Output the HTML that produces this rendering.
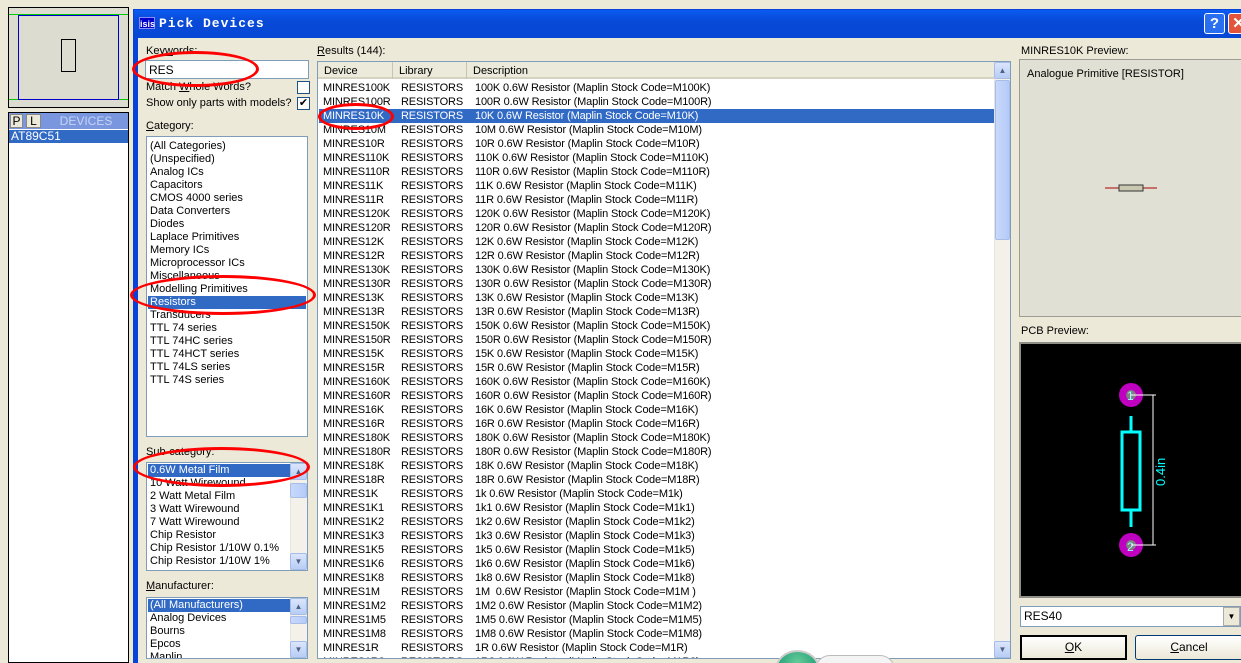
<!DOCTYPE html>
<html style="overflow:hidden;width:1241px;height:663px"><head><meta charset="utf-8"><style>
*{margin:0;padding:0;box-sizing:border-box}
body{width:1241px;height:663px;overflow:hidden;background:#ece9d8;font-family:"Liberation Sans",sans-serif;font-size:11px;color:#000;position:relative}
.a{position:absolute}
.w{background:#fff;border:1px solid #7f9db9}
.li{position:absolute;left:3px;height:13px;line-height:13px;white-space:nowrap}
.sel{background:#316ac5;color:#fff}
.row{position:absolute;left:1px;width:675px;height:14px;line-height:14px;white-space:nowrap;letter-spacing:-0.15px}
.row span{position:absolute;top:0}
.c1{left:4px}.c2{left:82px}.c3{left:156px}
.sb{position:absolute;background:#f3f1ea;border-left:1px solid #e6e4dc}
.btn{position:absolute;width:17px;height:17px;background:linear-gradient(#dbe5fb,#b7cdf6);border:1px solid #a6bde8;border-radius:2px;color:#4d6185;font-size:8px;text-align:center;line-height:15px}
.thumb{position:absolute;background:linear-gradient(90deg,#c9d8fc,#b4cbf8);border:1px solid #a6bde8;border-radius:2px}
.ell{position:absolute;border:3px solid #f00;border-radius:50%}
</style></head><body>
<div class="a" style="left:0;top:0;width:1241px;height:663px;overflow:hidden">
<!-- left app panel -->
<div class="a" style="left:0;top:0;width:133px;height:663px;background:#ece9d8"></div>
<div class="a" style="left:8px;top:7px;width:121px;height:101px;border:1px solid #000;background:#dcdcd0"></div>
<div class="a" style="left:9px;top:14px;width:119px;height:86px;border-top:1px solid #0c0;border-bottom:1px solid #0c0"></div>
<div class="a" style="left:18px;top:15px;width:101px;height:85px;border:1px solid #00c"></div>
<div class="a" style="left:61px;top:39px;width:15px;height:33px;border:1px solid #000"></div>
<div class="a" style="left:8px;top:112px;width:121px;height:551px;border:1px solid #000;background:#fff"></div>
<div class="a" style="left:9px;top:113px;width:119px;height:16px;background:#7a96df"></div>
<div class="a" style="left:10px;top:114px;width:13px;height:14px;background:#ece9d8;border:1px solid #888;text-align:center;line-height:12px;font-size:12px">P</div>
<div class="a" style="left:26px;top:114px;width:15px;height:14px;background:#ece9d8;border:1px solid #888;text-align:center;line-height:12px;font-size:12px">L</div>
<div class="a" style="left:44px;top:114px;width:84px;height:14px;color:#c7d4f3;text-align:center;line-height:14px;font-size:12px">DEVICES</div>
<div class="a sel" style="left:9px;top:130px;width:119px;height:13px;line-height:13px;padding-left:2px;font-size:12px">AT89C51</div>

<!-- dialog frame -->
<div class="a" style="left:133px;top:9px;width:1108px;height:654px;background:#0842d6"></div>
<div class="a" style="left:134px;top:10px;width:1107px;height:28px;background:linear-gradient(#0a5cf0,#0849d8 40%,#0647d4)"></div>
<div class="a" style="left:139px;top:17px;width:16px;height:12px;background:#0000c8;color:#fff;font-size:9px;font-weight:bold;line-height:12px;border:1px solid #88f">isis</div>
<div class="a" style="left:159px;top:16px;color:#fff;font-family:'Liberation Mono',monospace;font-weight:bold;font-size:13px;letter-spacing:1px">Pick Devices</div>
<div class="a" style="left:1204px;top:13px;width:21px;height:21px;background:#2a6ff0;border:1px solid #fff;border-radius:3px;color:#fff;font-weight:bold;font-size:15px;text-align:center;line-height:19px">?</div>
<div class="a" style="left:1228px;top:13px;width:21px;height:21px;background:#e2553a;border:1px solid #fff;border-radius:3px;color:#fff;font-weight:bold;font-size:15px;text-align:center;line-height:19px">✕</div>
<div class="a" style="left:138px;top:38px;width:1103px;height:625px;background:#ece9d8"></div>

<!-- keywords -->
<div class="a" style="left:146px;top:45px">Key<u>w</u>ords:</div>
<div class="a" style="left:145px;top:60px;width:164px;height:19px;background:#fff;border:1px solid #7f9db9;padding:2px 3px;font-size:12px">RES</div>
<div class="a" style="left:146px;top:81px">Match <u>W</u>hole Words?</div>
<div class="a" style="left:297px;top:81px;width:13px;height:13px;background:#fff;border:1px solid #1c5180"></div>
<div class="a" style="left:146px;top:97px">Show only parts with models?</div>
<div class="a" style="left:297px;top:97px;width:13px;height:13px;background:#fff;border:1px solid #1c5180;font-size:11px;line-height:11px;text-align:center">✔</div>
<div class="a" style="left:146px;top:120px"><u>C</u>ategory:</div>
<div class="a w" style="left:146px;top:136px;width:162px;height:301px">
<div class="li" style="top:3px">(All Categories)</div>
<div class="li" style="top:16px">(Unspecified)</div>
<div class="li" style="top:29px">Analog ICs</div>
<div class="li" style="top:42px">Capacitors</div>
<div class="li" style="top:55px">CMOS 4000 series</div>
<div class="li" style="top:68px">Data Converters</div>
<div class="li" style="top:81px">Diodes</div>
<div class="li" style="top:94px">Laplace Primitives</div>
<div class="li" style="top:107px">Memory ICs</div>
<div class="li" style="top:120px">Microprocessor ICs</div>
<div class="li" style="top:133px">Miscellaneous</div>
<div class="li" style="top:146px">Modelling Primitives</div>
<div class="li sel" style="top:159px;left:1px;width:158px;padding-left:2px">Resistors</div>
<div class="li" style="top:172px">Transducers</div>
<div class="li" style="top:185px">TTL 74 series</div>
<div class="li" style="top:198px">TTL 74HC series</div>
<div class="li" style="top:211px">TTL 74HCT series</div>
<div class="li" style="top:224px">TTL 74LS series</div>
<div class="li" style="top:237px">TTL 74S series</div>
</div>
<div class="a" style="left:146px;top:446px">Sub-category:</div>
<div class="a w" style="left:146px;top:462px;width:162px;height:109px;overflow:hidden">
<div class="li sel" style="top:1px;left:1px;width:142px;padding-left:2px">0.6W Metal Film</div>
<div class="li" style="top:14px">10 Watt Wirewound</div>
<div class="li" style="top:27px">2 Watt Metal Film</div>
<div class="li" style="top:40px">3 Watt Wirewound</div>
<div class="li" style="top:53px">7 Watt Wirewound</div>
<div class="li" style="top:66px">Chip Resistor</div>
<div class="li" style="top:79px">Chip Resistor 1/10W 0.1%</div>
<div class="li" style="top:92px">Chip Resistor 1/10W 1%</div>
<div class="sb" style="left:143px;top:0;width:17px;height:107px"></div>
<div class="btn" style="left:143px;top:0">▲</div>
<div class="thumb" style="left:143px;top:20px;width:17px;height:15px"></div>
<div class="btn" style="left:143px;top:90px">▼</div>
</div>
<div class="a" style="left:146px;top:580px"><u>M</u>anufacturer:</div>
<div class="a w" style="left:146px;top:597px;width:162px;height:62px;overflow:hidden">
<div class="li sel" style="top:1px;left:1px;width:142px;padding-left:2px">(All Manufacturers)</div>
<div class="li" style="top:14px">Analog Devices</div>
<div class="li" style="top:27px">Bourns</div>
<div class="li" style="top:40px">Epcos</div>
<div class="li" style="top:53px">Maplin</div>
<div class="sb" style="left:143px;top:0;width:17px;height:60px"></div>
<div class="btn" style="left:143px;top:0">▲</div>
<div class="thumb" style="left:143px;top:18px;width:17px;height:8px"></div>
<div class="btn" style="left:143px;top:43px">▼</div>
</div>

<!-- results -->
<div class="a" style="left:317px;top:45px"><u>R</u>esults (144):</div>
<div class="a w" style="left:317px;top:61px;width:694px;height:598px;overflow:hidden">
<div class="a" style="left:0;top:0;width:676px;height:17px;background:#ebeadb;border-bottom:2px solid #d6d2c2"></div>
<div class="a" style="left:0;top:0;width:75px;height:17px;border-right:1px solid #c7c5b2;padding:3px 6px">Device</div>
<div class="a" style="left:75px;top:0;width:74px;height:17px;border-right:1px solid #c7c5b2;padding:3px 6px">Library</div>
<div class="a" style="left:149px;top:0;width:527px;height:17px;padding:3px 6px">Description</div>
<div class="a" style="left:0;top:19px">
<div class="row" style="top:0"><span class="c1">MINRES100K</span><span class="c2">RESISTORS</span><span class="c3">100K 0.6W Resistor (Maplin Stock Code=M100K)</span></div>
<div class="row" style="top:14px"><span class="c1">MINRES100R</span><span class="c2">RESISTORS</span><span class="c3">100R 0.6W Resistor (Maplin Stock Code=M100R)</span></div>
<div class="row sel" style="top:28px"><span class="c1">MINRES10K</span><span class="c2">RESISTORS</span><span class="c3">10K 0.6W Resistor (Maplin Stock Code=M10K)</span></div>
<div class="row" style="top:42px"><span class="c1">MINRES10M</span><span class="c2">RESISTORS</span><span class="c3">10M 0.6W Resistor (Maplin Stock Code=M10M)</span></div>
<div class="row" style="top:56px"><span class="c1">MINRES10R</span><span class="c2">RESISTORS</span><span class="c3">10R 0.6W Resistor (Maplin Stock Code=M10R)</span></div>
<div class="row" style="top:70px"><span class="c1">MINRES110K</span><span class="c2">RESISTORS</span><span class="c3">110K 0.6W Resistor (Maplin Stock Code=M110K)</span></div>
<div class="row" style="top:84px"><span class="c1">MINRES110R</span><span class="c2">RESISTORS</span><span class="c3">110R 0.6W Resistor (Maplin Stock Code=M110R)</span></div>
<div class="row" style="top:98px"><span class="c1">MINRES11K</span><span class="c2">RESISTORS</span><span class="c3">11K 0.6W Resistor (Maplin Stock Code=M11K)</span></div>
<div class="row" style="top:112px"><span class="c1">MINRES11R</span><span class="c2">RESISTORS</span><span class="c3">11R 0.6W Resistor (Maplin Stock Code=M11R)</span></div>
<div class="row" style="top:126px"><span class="c1">MINRES120K</span><span class="c2">RESISTORS</span><span class="c3">120K 0.6W Resistor (Maplin Stock Code=M120K)</span></div>
<div class="row" style="top:140px"><span class="c1">MINRES120R</span><span class="c2">RESISTORS</span><span class="c3">120R 0.6W Resistor (Maplin Stock Code=M120R)</span></div>
<div class="row" style="top:154px"><span class="c1">MINRES12K</span><span class="c2">RESISTORS</span><span class="c3">12K 0.6W Resistor (Maplin Stock Code=M12K)</span></div>
<div class="row" style="top:168px"><span class="c1">MINRES12R</span><span class="c2">RESISTORS</span><span class="c3">12R 0.6W Resistor (Maplin Stock Code=M12R)</span></div>
<div class="row" style="top:182px"><span class="c1">MINRES130K</span><span class="c2">RESISTORS</span><span class="c3">130K 0.6W Resistor (Maplin Stock Code=M130K)</span></div>
<div class="row" style="top:196px"><span class="c1">MINRES130R</span><span class="c2">RESISTORS</span><span class="c3">130R 0.6W Resistor (Maplin Stock Code=M130R)</span></div>
<div class="row" style="top:210px"><span class="c1">MINRES13K</span><span class="c2">RESISTORS</span><span class="c3">13K 0.6W Resistor (Maplin Stock Code=M13K)</span></div>
<div class="row" style="top:224px"><span class="c1">MINRES13R</span><span class="c2">RESISTORS</span><span class="c3">13R 0.6W Resistor (Maplin Stock Code=M13R)</span></div>
<div class="row" style="top:238px"><span class="c1">MINRES150K</span><span class="c2">RESISTORS</span><span class="c3">150K 0.6W Resistor (Maplin Stock Code=M150K)</span></div>
<div class="row" style="top:252px"><span class="c1">MINRES150R</span><span class="c2">RESISTORS</span><span class="c3">150R 0.6W Resistor (Maplin Stock Code=M150R)</span></div>
<div class="row" style="top:266px"><span class="c1">MINRES15K</span><span class="c2">RESISTORS</span><span class="c3">15K 0.6W Resistor (Maplin Stock Code=M15K)</span></div>
<div class="row" style="top:280px"><span class="c1">MINRES15R</span><span class="c2">RESISTORS</span><span class="c3">15R 0.6W Resistor (Maplin Stock Code=M15R)</span></div>
<div class="row" style="top:294px"><span class="c1">MINRES160K</span><span class="c2">RESISTORS</span><span class="c3">160K 0.6W Resistor (Maplin Stock Code=M160K)</span></div>
<div class="row" style="top:308px"><span class="c1">MINRES160R</span><span class="c2">RESISTORS</span><span class="c3">160R 0.6W Resistor (Maplin Stock Code=M160R)</span></div>
<div class="row" style="top:322px"><span class="c1">MINRES16K</span><span class="c2">RESISTORS</span><span class="c3">16K 0.6W Resistor (Maplin Stock Code=M16K)</span></div>
<div class="row" style="top:336px"><span class="c1">MINRES16R</span><span class="c2">RESISTORS</span><span class="c3">16R 0.6W Resistor (Maplin Stock Code=M16R)</span></div>
<div class="row" style="top:350px"><span class="c1">MINRES180K</span><span class="c2">RESISTORS</span><span class="c3">180K 0.6W Resistor (Maplin Stock Code=M180K)</span></div>
<div class="row" style="top:364px"><span class="c1">MINRES180R</span><span class="c2">RESISTORS</span><span class="c3">180R 0.6W Resistor (Maplin Stock Code=M180R)</span></div>
<div class="row" style="top:378px"><span class="c1">MINRES18K</span><span class="c2">RESISTORS</span><span class="c3">18K 0.6W Resistor (Maplin Stock Code=M18K)</span></div>
<div class="row" style="top:392px"><span class="c1">MINRES18R</span><span class="c2">RESISTORS</span><span class="c3">18R 0.6W Resistor (Maplin Stock Code=M18R)</span></div>
<div class="row" style="top:406px"><span class="c1">MINRES1K</span><span class="c2">RESISTORS</span><span class="c3">1k 0.6W Resistor (Maplin Stock Code=M1k)</span></div>
<div class="row" style="top:420px"><span class="c1">MINRES1K1</span><span class="c2">RESISTORS</span><span class="c3">1k1 0.6W Resistor (Maplin Stock Code=M1k1)</span></div>
<div class="row" style="top:434px"><span class="c1">MINRES1K2</span><span class="c2">RESISTORS</span><span class="c3">1k2 0.6W Resistor (Maplin Stock Code=M1k2)</span></div>
<div class="row" style="top:448px"><span class="c1">MINRES1K3</span><span class="c2">RESISTORS</span><span class="c3">1k3 0.6W Resistor (Maplin Stock Code=M1k3)</span></div>
<div class="row" style="top:462px"><span class="c1">MINRES1K5</span><span class="c2">RESISTORS</span><span class="c3">1k5 0.6W Resistor (Maplin Stock Code=M1k5)</span></div>
<div class="row" style="top:476px"><span class="c1">MINRES1K6</span><span class="c2">RESISTORS</span><span class="c3">1k6 0.6W Resistor (Maplin Stock Code=M1k6)</span></div>
<div class="row" style="top:490px"><span class="c1">MINRES1K8</span><span class="c2">RESISTORS</span><span class="c3">1k8 0.6W Resistor (Maplin Stock Code=M1k8)</span></div>
<div class="row" style="top:504px"><span class="c1">MINRES1M</span><span class="c2">RESISTORS</span><span class="c3">1M&nbsp; 0.6W Resistor (Maplin Stock Code=M1M )</span></div>
<div class="row" style="top:518px"><span class="c1">MINRES1M2</span><span class="c2">RESISTORS</span><span class="c3">1M2 0.6W Resistor (Maplin Stock Code=M1M2)</span></div>
<div class="row" style="top:532px"><span class="c1">MINRES1M5</span><span class="c2">RESISTORS</span><span class="c3">1M5 0.6W Resistor (Maplin Stock Code=M1M5)</span></div>
<div class="row" style="top:546px"><span class="c1">MINRES1M8</span><span class="c2">RESISTORS</span><span class="c3">1M8 0.6W Resistor (Maplin Stock Code=M1M8)</span></div>
<div class="row" style="top:560px"><span class="c1">MINRES1R</span><span class="c2">RESISTORS</span><span class="c3">1R 0.6W Resistor (Maplin Stock Code=M1R)</span></div>
<div class="row" style="top:574px"><span class="c1">MINRES1R2</span><span class="c2">RESISTORS</span><span class="c3">1R2 0.6W Resistor (Maplin Stock Code=M1R2)</span></div>
</div>
<div class="sb" style="left:676px;top:0;width:17px;height:597px"></div>
<div class="btn" style="left:676px;top:0">▲</div>
<div class="thumb" style="left:677px;top:18px;width:15px;height:160px"></div>
<div class="btn" style="left:676px;top:579px">▼</div>
</div>

<!-- right -->
<div class="a" style="left:1021px;top:45px">MINRES10K Preview:</div>
<div class="a" style="left:1019px;top:59px;width:222px;height:258px;background:#e1e0d4;border:1px solid #9d9d92;border-right:none"></div>
<div class="a" style="left:1027px;top:68px">Analogue Primitive [RESISTOR]</div>
<svg class="a" style="left:1105px;top:183px" width="52" height="10"><line x1="0" y1="5" x2="14" y2="5" stroke="#a00"/><line x1="38" y1="5" x2="52" y2="5" stroke="#a00"/><rect x="14" y="2" width="24" height="6" fill="#c8c8b0" stroke="#333"/></svg>
<div class="a" style="left:1021px;top:325px">PCB Preview:</div>
<div class="a" style="left:1019px;top:342px;width:222px;height:256px;background:#000;border:2px solid #8f8f88;border-right:none"></div>
<svg class="a" style="left:1021px;top:344px" width="220" height="252">
<line x1="110" y1="72" x2="110" y2="88" stroke="#0ff" stroke-width="3"/>
<rect x="101" y="88" width="18" height="78" fill="none" stroke="#0ff" stroke-width="3"/>
<line x1="110" y1="166" x2="110" y2="183" stroke="#0ff" stroke-width="3"/>
<circle cx="110" cy="51" r="12" fill="#c000c0"/><circle cx="110" cy="51" r="5" fill="#808080"/>
<circle cx="110" cy="201" r="12" fill="#c000c0"/><circle cx="110" cy="201" r="5" fill="#808080"/>
<text x="106" y="56" fill="#9ff" font-size="12" font-family="Liberation Sans">1</text>
<text x="106" y="207" fill="#9ff" font-size="12" font-family="Liberation Sans">2</text>
<line x1="110" y1="51" x2="135" y2="51" stroke="#fff"/><line x1="110" y1="201" x2="135" y2="201" stroke="#fff"/>
<line x1="132" y1="51" x2="132" y2="201" stroke="#fff"/>
<text x="0" y="0" fill="#0ff" font-size="13" font-family="Liberation Sans" transform="translate(144,142) rotate(-90)">0.4in</text>
</svg>
<div class="a" style="left:1020px;top:606px;width:221px;height:21px;background:#fff;border:1px solid #7f9db9;padding:2px 3px;font-size:12px">RES40</div>
<div class="a" style="left:1223px;top:607px;width:17px;height:19px;background:#ece9d8;border:1px solid #aaa;font-size:8px;text-align:center;line-height:18px">▼</div>
<div class="a" style="left:1020px;top:635px;width:107px;height:25px;border:2px solid #000;background:linear-gradient(#fff,#ece9d8);text-align:center;line-height:21px;font-size:12px"><u>O</u>K</div>
<div class="a" style="left:1135px;top:635px;width:108px;height:25px;border:1px solid #003c74;border-radius:3px;background:linear-gradient(#fff,#ece9d8);text-align:center;line-height:23px;font-size:12px"><u>C</u>ancel</div>

<div class="a" style="left:815px;top:655px;width:80px;height:30px;border-radius:15px;background:#f4f4f4;border:1px solid #bbb"></div>
<div class="a" style="left:775px;top:650px;width:45px;height:40px;border-radius:50%;background:radial-gradient(circle at 50% 30%,#6c9,#086);border:2px solid #ccc"></div>

<!-- red ellipses -->
<div class="ell" style="left:132px;top:51px;width:127px;height:36px"></div>
<div class="ell" style="left:130px;top:275px;width:186px;height:40px"></div>
<div class="ell" style="left:133px;top:447px;width:177px;height:40px"></div>
<div class="ell" style="left:318px;top:103px;width:76px;height:27px"></div>
</div>
</body></html>
